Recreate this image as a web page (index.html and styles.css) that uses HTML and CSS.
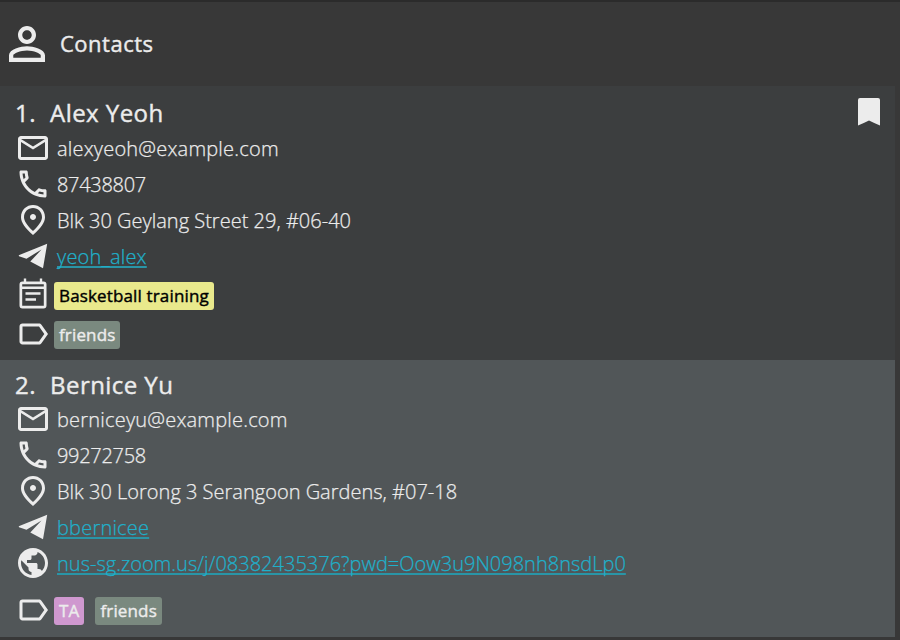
FILE: index.html
```html
<!DOCTYPE html>
<html lang="en">
<head>
<meta charset="utf-8">
<title>Contacts</title>
<link rel="stylesheet" href="styles.css">
</head>
<body>
<svg class="defs" width="0" height="0">
  <symbol id="mail" viewBox="0 0 24 24"><path d="M22 6c0-1.100-.9-2-2-2H4c-1.100 0-2 .9-2 2v12c0 1.100.9 2 2 2h16c1.100 0 2-.9 2-2V6zm-2 0l-8 5-8-5h16zm0 12H4V8l8 5 8-5v10z"/></symbol>
  <symbol id="phone" viewBox="0 0 24 24"><path d="M6.540 5c.060.890.210 1.760.450 2.590l-1.200 1.200c-.410-1.200-.670-2.470-.760-3.790h1.510m9.860 12.020c.850.240 1.720.390 2.600.450v1.490c-1.320-.090-2.590-.350-3.800-.750l1.200-1.190M7.500 3H4c-.550 0-1 .450-1 1 0 9.390 7.610 17 17 17 .550 0 1-.450 1-1v-3.490c0-.550-.450-1-1-1-1.240 0-2.450-.200-3.570-.570-.350-.120-.750-.030-1.020.240l-2.200 2.200c-2.830-1.450-5.150-3.760-6.590-6.590l2.200-2.200c.280-.280.360-.670.250-1.020C8.700 6.450 8.500 5.250 8.500 4c0-.550-.450-1-1-1z"/></symbol>
  <symbol id="pin" viewBox="0 0 24 24"><path d="M12 12c1.100 0 2-.9 2-2s-.9-2-2-2-2 .9-2 2 .9 2 2 2zm6-1.800C18 6.570 15.350 4 12 4s-6 2.570-6 6.200c0 2.340 1.950 5.440 6 9.140 4.050-3.700 6-6.800 6-9.140zM12 2c4.200 0 8 3.220 8 8.200 0 3.320-2.670 7.250-8 11.800-5.330-4.550-8-8.480-8-11.800C4 5.220 7.800 2 12 2z"/></symbol>
  <symbol id="plane" viewBox="0 0 36 36"><path d="M3.700 17.300L32.200 5.700 28 30.200 15.300 23.600 26.500 11.500 11.500 20.700 4 18.200z"/></symbol>
  <symbol id="note" viewBox="0 0 36 36"><path fill-rule="evenodd" d="M8.800 4.500h2.400V7.500h13.600V4.500h2.400V7.500h1.300a3 3 0 0 1 3 3v21a3 3 0 0 1-3 3h-21a3 3 0 0 1-3-3v-21a3 3 0 0 1 3-3h1.300zM7.200 10.200v2.300h21.600v-2.300zM7.200 15v16.800h21.600V15zM10.500 18.200h15v2.600h-15zM10.500 24.200h10.500v2.600H10.500z"/></symbol>
  <symbol id="label" viewBox="0 0 24 24"><path d="M17.630 5.840C17.270 5.330 16.670 5 16 5L5 5.010C3.900 5.010 3 5.900 3 7v10c0 1.100.9 1.990 2 1.990L16 19c.670 0 1.270-.330 1.630-.840L22 12l-4.370-6.160zM16 17H5V7h11l3.550 5L16 17z"/></symbol>
  <symbol id="globe" viewBox="0 0 24 24"><path d="M12 2C6.480 2 2 6.480 2 12s4.480 10 10 10 10-4.480 10-10S17.520 2 12 2zm-1 17.930c-3.950-.490-7-3.850-7-7.930 0-.620.080-1.210.210-1.790L9 15v1c0 1.100.9 2 2 2v1.930zm6.900-2.540c-.260-.810-1-1.390-1.900-1.390h-1v-3c0-.550-.450-1-1-1H8v-2h2c.550 0 1-.450 1-1V7h2c1.100 0 2-.9 2-2v-.410c2.930 1.190 5 4.060 5 7.410 0 2.080-.800 3.970-2.100 5.390z"/></symbol>
</svg>
<header class="header">
  <svg class="person" viewBox="0 0 24 24"><path d="M12 5.900c1.160 0 2.100.940 2.100 2.100s-.940 2.100-2.100 2.100S9.900 9.160 9.900 8s.940-2.100 2.100-2.100m0 9c2.970 0 6.100 1.460 6.100 2.100v1.100H5.900V17c0-.640 3.130-2.100 6.100-2.100M12 4C9.790 4 8 5.790 8 8s1.790 4 4 4 4-1.790 4-4-1.790-4-4-4zm0 9c-2.670 0-8 1.340-8 4v3h16v-3c0-2.660-5.330-4-8-4z"/></svg>
  <h1 class="title">Contacts</h1>
</header>
<main class="list">
  <section class="card">
    <h2 class="name"><span class="num">1.</span><span class="person-name">Alex Yeoh</span></h2>
    <svg class="bookmark" viewBox="0 0 22 28"><path d="M2 0h18a2 2 0 0 1 2 2v25.500Q16 25 11 22.500Q6 25 0 27.500V2a2 2 0 0 1 2-2z"/></svg>
    <div class="row"><svg class="icon"><use href="#mail"/></svg><span class="text">alexyeoh@example.com</span></div>
    <div class="row"><svg class="icon"><use href="#phone"/></svg><span class="text digits">87438807</span></div>
    <div class="row"><svg class="icon"><use href="#pin"/></svg><span class="text address">Blk 30 Geylang Street 29, #06-40</span></div>
    <div class="row"><svg class="icon"><use href="#plane"/></svg><a class="text link">yeoh_alex</a></div>
    <div class="row event"><svg class="icon"><use href="#note"/></svg><span class="chip yellow">Basketball training</span></div>
    <div class="row tags"><svg class="icon"><use href="#label"/></svg><span class="chip">friends</span></div>
  </section>
  <section class="card alt">
    <h2 class="name"><span class="num">2.</span><span class="person-name">Bernice Yu</span></h2>
    <div class="row"><svg class="icon"><use href="#mail"/></svg><span class="text">berniceyu@example.com</span></div>
    <div class="row"><svg class="icon"><use href="#phone"/></svg><span class="text digits">99272758</span></div>
    <div class="row"><svg class="icon"><use href="#pin"/></svg><span class="text address">Blk 30 Lorong 3 Serangoon Gardens, #07-18</span></div>
    <div class="row"><svg class="icon"><use href="#plane"/></svg><a class="text link">bbernicee</a></div>
    <div class="row"><svg class="icon"><use href="#globe"/></svg><a class="text link address">nus-sg.zoom.us/j/08382435376?pwd=Oow3u9N098nh8nsdLp0</a></div>
    <div class="row tags alt-tags"><svg class="icon"><use href="#label"/></svg><span class="chip pink">TA</span><span class="chip">friends</span></div>
  </section>
</main>
</body>
</html>
```
FILE: styles.css
```css
* { box-sizing: border-box; }
body {
  margin: 0;
  height: 640px;
  overflow: hidden;
  background: #383838;
  color: #ececec;
  font-family: "Open Sans", sans-serif;
}
svg { display: block; fill: #ececec; flex: none; }
.defs { position: absolute; }
.header {
  display: flex;
  align-items: center;
  gap: 6px;
  height: 86px;
  border-top: 2px solid #2b2b2b;
}
.person { width: 54px; height: 54px; }
.title {
  margin: 0;
  padding-bottom: 2px;
  font-size: 22px;
  font-weight: 400;
  line-height: 30px;
  letter-spacing: 0.5px;
  -webkit-text-stroke: 0.4px;
}
.list { width: 895px; }
.card {
  position: relative;
  height: 274px;
  padding: 11px 0 0 15px;
  background: #3c3e3f;
}
.card.alt { height: 277px; background: #515658; }
.name {
  display: flex;
  margin: 0;
  height: 33px;
  font-size: 24px;
  font-weight: 400;
  line-height: 31px;
  letter-spacing: 0.45px;
  -webkit-text-stroke: 0.4px;
}
.alt .name { height: 30px; line-height: 27px; }
.num { width: 35px; }
.bookmark { position: absolute; left: 858px; top: 12px; width: 22px; height: 28px; }
.row { display: flex; align-items: center; height: 36px; }
.icon { width: 36px; height: 36px; }
.text {
  margin: 2px 0 0 6px;
  font-size: 20px;
  font-weight: 300;
  line-height: 28px;
  letter-spacing: 0.2px;
  -webkit-text-stroke: 0.25px;
}
.digits { letter-spacing: -0.3px; }
.address { letter-spacing: 0.01px; }
.link {
  color: #1fb0ca;
  text-decoration: underline;
  text-decoration-thickness: 2px;
  text-underline-offset: 2px;
  text-decoration-color: #2995a7;
  text-decoration-skip-ink: none;
}
.event { height: 44px; }
.event .icon { margin-bottom: 8px; }
.tags { height: 34px; }
.tags .icon { margin-bottom: 2px; }
.chip {
  height: 28px;
  margin: 0 8px 0 3px;
  padding: 0 5px;
  border-radius: 3px;
  background: #7a897f;
  font-size: 17px;
  font-weight: 400;
  line-height: 28px;
  letter-spacing: 0.15px;
  -webkit-text-stroke: 0.4px;
}
.yellow { background: #e9e98c; color: #000; }
.pink { background: #cf98cf; }
.alt-tags { margin-top: 13px; }
```
